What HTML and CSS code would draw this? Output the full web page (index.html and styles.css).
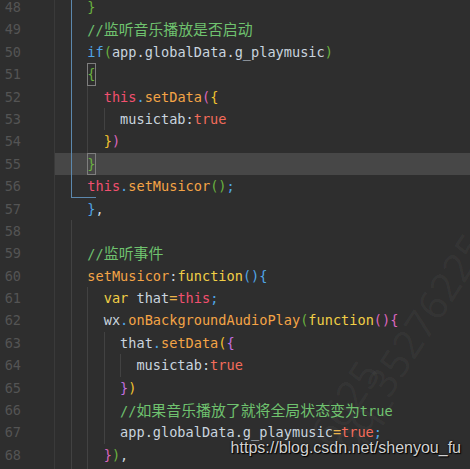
FILE: index.html
```html
<!doctype html>
<html lang="zh-CN">
  <head>
    <meta charset="UTF-8" />
    <meta name="viewport" content="width=device-width, initial-scale=1.0" />
    <title>editor</title>
    <link rel="stylesheet" href="styles.css">
  </head>
  <body>
    <div class="editor">
      <div class="lines">
        <div class="row"><span class="ln">48</span><div class="code"><i class="g scope"></i><span class="tx"><span class="p2">}</span></span></div></div>
        <div class="row"><span class="ln">49</span><div class="code"><i class="g scope"></i><span class="tx c">//<span class="zh">监听音乐播放是否启动</span></span></div></div>
        <div class="row"><span class="ln">50</span><div class="code"><i class="g scope"></i><span class="tx"><span class="b">if</span><span class="p2">(</span>app.globalData.g_playmusic<span class="p2">)</span></span></div></div>
        <div class="row"><span class="ln">51</span><div class="code"><i class="g scope"></i><span class="tx"><span class="p2 match">{</span></span></div></div>
        <div class="row"><span class="ln">52</span><div class="code"><i class="g scope"></i><i class="g"></i><span class="tx"><span class="t">this</span><span class="b">.</span><span class="o">setData</span><span class="p3">(</span><span class="p4">{</span></span></div></div>
        <div class="row"><span class="ln">53</span><div class="code"><i class="g scope"></i><i class="g"></i><i class="g"></i><span class="tx">musictab:<span class="r">true</span></span></div></div>
        <div class="row"><span class="ln">54</span><div class="code"><i class="g scope"></i><i class="g"></i><span class="tx"><span class="p4">}</span><span class="p3">)</span></span></div></div>
        <div class="row current"><span class="ln">55</span><div class="code"><i class="g scope"></i><span class="tx"><span class="p2 match">}</span></span></div></div>
        <div class="row"><span class="ln">56</span><div class="code"><i class="g scope end"></i><span class="tx"><span class="t">this</span><span class="b">.</span><span class="o">setMusicor</span><span class="p2">()</span><span class="b">;</span></span></div></div>
        <div class="row"><span class="ln">57</span><div class="code"><i class="g off"></i><span class="tx"><span class="p1">}</span>,</span></div></div>
        <div class="row"><span class="ln">58</span><div class="code"><i class="g"></i><span class="tx"></span></div></div>
        <div class="row"><span class="ln">59</span><div class="code"><i class="g"></i><span class="tx c">//<span class="zh">监听事件</span></span></div></div>
        <div class="row"><span class="ln">60</span><div class="code"><i class="g"></i><span class="tx"><span class="o">setMusicor</span>:<span class="y">function</span><span class="p1">(){</span></span></div></div>
        <div class="row"><span class="ln">61</span><div class="code"><i class="g"></i><i class="g"></i><span class="tx"><span class="y">var</span> that<span class="eq">=</span><span class="t">this</span><span class="b">;</span></span></div></div>
        <div class="row"><span class="ln">62</span><div class="code"><i class="g"></i><i class="g"></i><span class="tx">wx<span class="b">.</span><span class="o">onBackgroundAudioPlay</span><span class="p2">(</span><span class="y">function</span><span class="p3">(){</span></span></div></div>
        <div class="row"><span class="ln">63</span><div class="code"><i class="g"></i><i class="g"></i><i class="g"></i><span class="tx">that<span class="b">.</span><span class="o">setData</span><span class="p4">(</span><span class="p5">{</span></span></div></div>
        <div class="row"><span class="ln">64</span><div class="code"><i class="g"></i><i class="g"></i><i class="g"></i><i class="g"></i><span class="tx">musictab:<span class="r">true</span></span></div></div>
        <div class="row"><span class="ln">65</span><div class="code"><i class="g"></i><i class="g"></i><i class="g"></i><span class="tx"><span class="p5">}</span><span class="p4">)</span></span></div></div>
        <div class="row"><span class="ln">66</span><div class="code"><i class="g"></i><i class="g"></i><i class="g"></i><span class="tx c">//<span class="zh">如果音乐播放了就将全局状态变为</span>true</span></div></div>
        <div class="row"><span class="ln">67</span><div class="code"><i class="g"></i><i class="g"></i><i class="g"></i><span class="tx">app.globalData.g_playmusic<span class="eq">=</span><span class="r">true</span><span class="b">;</span></span></div></div>
        <div class="row"><span class="ln">68</span><div class="code"><i class="g"></i><i class="g"></i><span class="tx"><span class="p3">}</span><span class="p2">)</span>,</span></div></div>
        <div class="row"><span class="ln"></span><div class="code"><i class="g"></i><i class="g"></i><span class="tx"></span></div></div>
      </div>

      <!-- watermark -->
      <span class="mark mark-a">qq_35276225</span>
      <span class="mark mark-b">6625</span>
      <span class="url">https://blog.csdn.net/shenyou_fu</span>
    </div>
  </body>
</html>
```

FILE: styles.css
```css
body {
  margin: 0;
  padding: 0;
  background: #2e2e2e;
}

.editor {
  position: relative;
  width: 470px;
  height: 469px;
  overflow: hidden;
  background: #2e2e2e;
  font-family: "DejaVu Sans Mono", "Liberation Mono", monospace;
  font-size: 13.6px;
  color: #c9d4df;
}

.lines {
  margin-top: -4px;
}

.row {
  display: flex;
  height: 22.4px;
  line-height: 22.4px;
}

.ln {
  flex: none;
  width: 55px;
  box-sizing: border-box;
  padding-right: 33px;
  text-align: right;
  color: #545454;
  border-right: 1px solid #3a3a3a;
}

.code {
  flex: 1;
  display: flex;
  padding-left: 16px;
}

.row.current .code {
  background: #474747;
}

/* indent guides, 2 columns each */
.g {
  position: relative;
  flex: none;
  width: 2ch;
  box-sizing: border-box;
  border-left: 1px solid #424242;
}

.g.scope {
  border-left-color: #5c88ad;
}

.g.off {
  border-left-color: transparent;
}

.g.end::after {
  content: "";
  position: absolute;
  left: -1px;
  bottom: 0;
  width: 25px;
  height: 1px;
  background: #5c88ad;
}

.tx {
  white-space: pre;
}

.zh {
  font-family: "Noto Sans CJK SC", sans-serif;
  font-size: 14.9px;
}

.match {
  display: inline-block;
  box-shadow: inset 0 0 0 1px #7e7e7e;
}

/* syntax */
.c { color: #6fc26e; }
.b { color: #50a6e6; }
.t { color: #f2506f; }
.o { color: #f4a446; }
.y { color: #f1cf46; }
.r { color: #f46c5b; }
.eq { color: #eab34a; }

/* rainbow brackets */
.p1 { color: #50a6e6; }
.p2 { color: #6ab23e; }
.p3 { color: #db66be; }
.p4 { color: #f0c22e; }
.p5 { color: #c46ee0; }

.mark {
  position: absolute;
  font-family: "Noto Sans", sans-serif;
  font-size: 40px;
  line-height: 40px;
  color: rgba(255, 255, 255, 0.04);
  transform-origin: right center;
  transform: rotate(-57deg);
  white-space: nowrap;
}

.mark-a {
  right: -6px;
  top: 218px;
}

.mark-b {
  right: 100px;
  top: 345px;
}

.url {
  position: absolute;
  right: 9px;
  top: 440px;
  font-family: "Liberation Sans", Arial, sans-serif;
  font-size: 16px;
  line-height: 16px;
  color: #d2d2d2;
  text-shadow: 0 0 2px #000, 1px 1px 1px #000;
}
```
